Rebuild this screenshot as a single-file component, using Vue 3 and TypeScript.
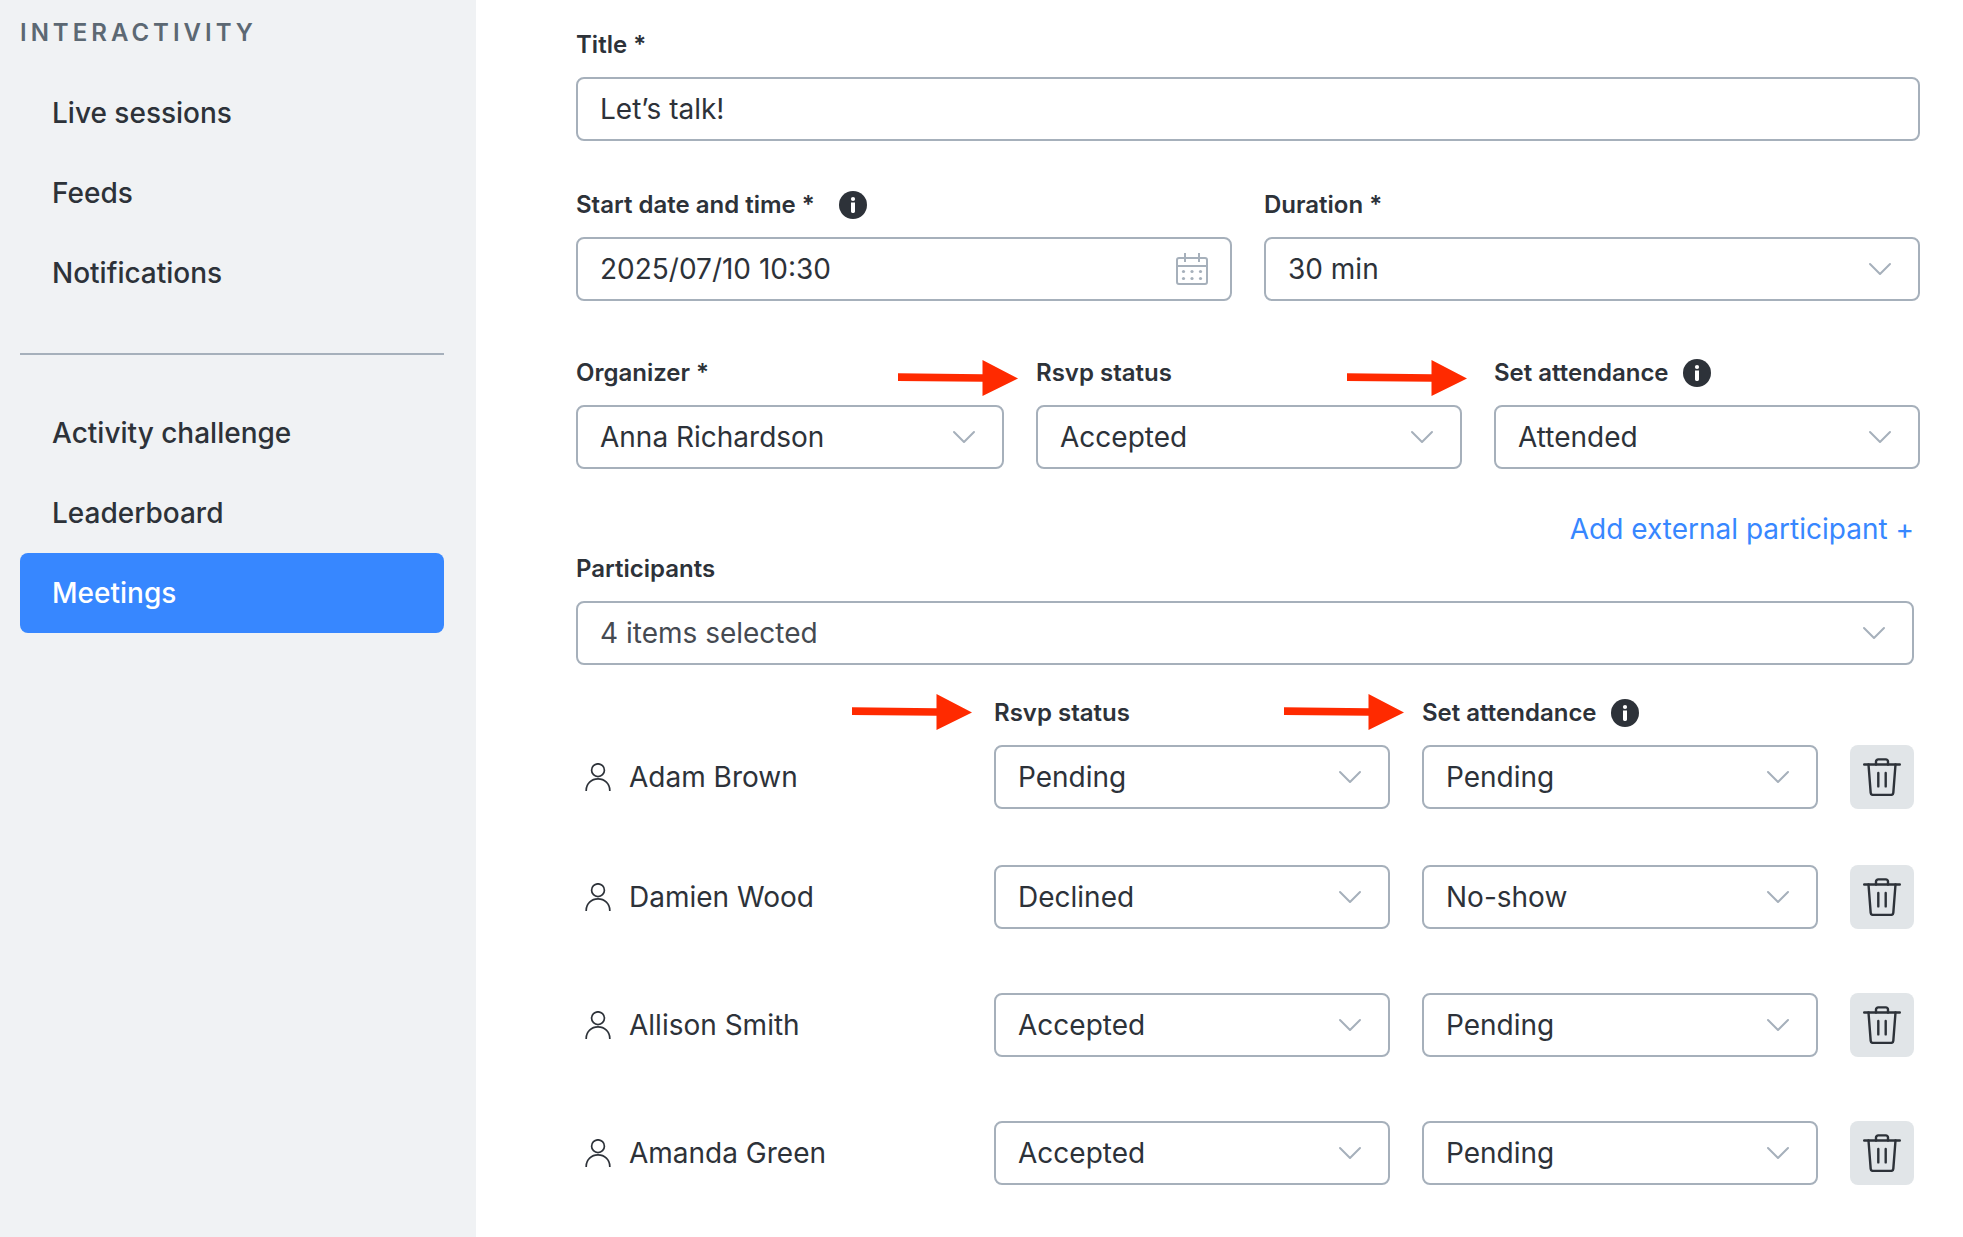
<script setup lang="ts">
import { ref } from 'vue'

interface Participant {
  name: string
  rsvp: string
  attendance: string
}

const topLinks: string[] = ['Live sessions', 'Feeds', 'Notifications']
const bottomLinks: string[] = ['Activity challenge', 'Leaderboard', 'Meetings']
const activeLink = 'Meetings'

const rsvpOptions: string[] = ['Pending', 'Accepted', 'Declined']
const attendanceOptions: string[] = ['Pending', 'Attended', 'No-show']
const durations: string[] = ['15 min', '30 min', '60 min']

const title = ref('Let’s talk!')
const start = ref('2025/07/10 10:30')
const duration = ref('30 min')
const organizer = ref('Anna Richardson')
const organizerRsvp = ref('Accepted')
const organizerAttendance = ref('Attended')

const participants = ref<Participant[]>([
  { name: 'Adam Brown', rsvp: 'Pending', attendance: 'Pending' },
  { name: 'Damien Wood', rsvp: 'Declined', attendance: 'No-show' },
  { name: 'Allison Smith', rsvp: 'Accepted', attendance: 'Pending' },
  { name: 'Amanda Green', rsvp: 'Accepted', attendance: 'Pending' },
])

function remove(index: number): void {
  participants.value.splice(index, 1)
}
</script>

<template>
  <svg class="symbols" aria-hidden="true">
    <symbol id="chevron" viewBox="0 0 24 14">
      <path d="M2 2l10 10L22 2" fill="none" stroke="currentColor" stroke-width="2" stroke-linecap="round" stroke-linejoin="round" />
    </symbol>
    <symbol id="info" viewBox="0 0 28 28">
      <circle cx="14" cy="14" r="14" fill="#2d3239" />
      <circle cx="14" cy="8" r="2.1" fill="#fff" />
      <path d="M12 11.4h4V20.6a1.4 1.4 0 0 1-1.4 1.4h-1.2a1.4 1.4 0 0 1-1.4-1.4z" fill="#fff" />
    </symbol>
    <symbol id="arrow" viewBox="0 0 120 36">
      <path d="M0 13.3L84.500 14.200V0L120 18.400L84.500 36V21.800L0 21z" fill="#ff2a00" />
    </symbol>
    <symbol id="person" viewBox="0 0 26 28">
      <g fill="none" stroke="#2d3239" stroke-width="1.700">
        <circle cx="13" cy="7.200" r="6.400" />
        <path d="M1.200 28v-.6C1.200 20.700 6.400 15.900 13 15.900s11.800 4.800 11.800 11.500v.6" />
      </g>
    </symbol>
    <symbol id="trash" viewBox="0 0 38 38">
      <g fill="none" stroke="#2d3239" stroke-width="2.400" stroke-linecap="round" stroke-linejoin="round">
        <path d="M1.200 6.500h35.600" />
        <path d="M13 6.500V3.600a2.200 2.200 0 0 1 2.200-2.200h7.600A2.200 2.200 0 0 1 25 3.600v2.900" />
        <path d="M5.500 6.500l2.200 28.300A2.300 2.300 0 0 0 10 36.900h18a2.300 2.300 0 0 0 2.300-2.100L32.500 6.500" />
        <path d="M15.300 15v13.400M22.700 15v13.400" />
      </g>
    </symbol>
  </svg>

  <div class="page">
    <aside class="sidebar">
      <h2 class="heading">INTERACTIVITY</h2>
      <nav>
        <a v-for="link in topLinks" :key="link" href="#" class="nav-link">{{ link }}</a>
        <hr class="divider" />
        <a
          v-for="link in bottomLinks"
          :key="link"
          href="#"
          class="nav-link"
          :class="{ active: link === activeLink }"
        >{{ link }}</a>
      </nav>
    </aside>

    <main class="content">
      <form @submit.prevent>
        <div class="field">
          <div class="label-row"><label for="title">Title *</label></div>
          <input id="title" v-model="title" class="control" type="text" />
        </div>

        <div class="row halves">
          <div class="field">
            <div class="label-row spaced">
              <label for="start">Start date and time *</label>
              <svg class="info" role="img" aria-label="Information"><use href="#info" /></svg>
            </div>
            <div class="box">
              <input id="start" v-model="start" class="control" type="text" />
              <svg class="calendar" viewBox="0 0 32 32" aria-hidden="true">
                <g fill="none" stroke="currentColor" stroke-width="2">
                  <rect x="1" y="5" width="30" height="26" rx="2" />
                  <path d="M1 13h30M9 0v9M23 0v9" />
                </g>
                <g fill="currentColor">
                  <circle cx="7.500" cy="18.500" r="1.600" />
                  <circle cx="16" cy="18.500" r="1.600" />
                  <circle cx="24.500" cy="18.500" r="1.600" />
                  <circle cx="7.500" cy="25.500" r="1.600" />
                  <circle cx="16" cy="25.500" r="1.600" />
                  <circle cx="24.500" cy="25.500" r="1.600" />
                </g>
              </svg>
            </div>
          </div>
          <div class="field">
            <div class="label-row"><label for="duration">Duration *</label></div>
            <div class="box">
              <select id="duration" v-model="duration" class="control">
                <option v-for="d in durations" :key="d">{{ d }}</option>
              </select>
              <svg class="chevron" aria-hidden="true"><use href="#chevron" /></svg>
            </div>
          </div>
        </div>

        <div class="row thirds">
          <div class="field">
            <div class="label-row"><label for="organizer">Organizer *</label></div>
            <div class="box">
              <select id="organizer" v-model="organizer" class="control">
                <option>Anna Richardson</option>
              </select>
              <svg class="chevron" aria-hidden="true"><use href="#chevron" /></svg>
            </div>
          </div>
          <div class="field">
            <div class="label-row">
              <svg class="arrow" aria-hidden="true"><use href="#arrow" /></svg>
              <label for="organizer-rsvp">Rsvp status</label>
            </div>
            <div class="box">
              <select id="organizer-rsvp" v-model="organizerRsvp" class="control">
                <option v-for="o in rsvpOptions" :key="o">{{ o }}</option>
              </select>
              <svg class="chevron" aria-hidden="true"><use href="#chevron" /></svg>
            </div>
          </div>
          <div class="field">
            <div class="label-row">
              <svg class="arrow far" aria-hidden="true"><use href="#arrow" /></svg>
              <label for="organizer-attendance">Set attendance</label>
              <svg class="info" role="img" aria-label="Information"><use href="#info" /></svg>
            </div>
            <div class="box">
              <select id="organizer-attendance" v-model="organizerAttendance" class="control">
                <option v-for="o in attendanceOptions" :key="o">{{ o }}</option>
              </select>
              <svg class="chevron" aria-hidden="true"><use href="#chevron" /></svg>
            </div>
          </div>
        </div>

        <section class="participants">
          <a href="#" class="add-link">Add external participant +</a>
          <div class="field">
            <div class="label-row"><label for="participants">Participants</label></div>
            <div class="box">
              <select id="participants" class="control summary">
                <option>{{ participants.length }} items selected</option>
              </select>
              <svg class="chevron" aria-hidden="true"><use href="#chevron" /></svg>
            </div>
          </div>

          <ul class="list">
            <li v-for="(person, i) in participants" :key="person.name" class="participant">
              <div class="person">
                <svg class="person-icon" aria-hidden="true"><use href="#person" /></svg>
                <span>{{ person.name }}</span>
              </div>
              <div class="field">
                <div v-if="i === 0" class="label-row">
                  <svg class="arrow raised mid" aria-hidden="true"><use href="#arrow" /></svg>
                  <label for="rsvp-0">Rsvp status</label>
                </div>
                <div class="box">
                  <select :id="`rsvp-${i}`" v-model="person.rsvp" class="control" :aria-label="`Rsvp status of ${person.name}`">
                    <option v-for="o in rsvpOptions" :key="o">{{ o }}</option>
                  </select>
                  <svg class="chevron" aria-hidden="true"><use href="#chevron" /></svg>
                </div>
              </div>
              <div class="field">
                <div v-if="i === 0" class="label-row">
                  <svg class="arrow raised" aria-hidden="true"><use href="#arrow" /></svg>
                  <label for="attendance-0">Set attendance</label>
                  <svg class="info" role="img" aria-label="Information"><use href="#info" /></svg>
                </div>
                <div class="box">
                  <select :id="`attendance-${i}`" v-model="person.attendance" class="control" :aria-label="`Attendance of ${person.name}`">
                    <option v-for="o in attendanceOptions" :key="o">{{ o }}</option>
                  </select>
                  <svg class="chevron" aria-hidden="true"><use href="#chevron" /></svg>
                </div>
              </div>
              <button type="button" class="delete" :aria-label="`Remove ${person.name}`" @click="remove(i)">
                <svg class="trash" aria-hidden="true"><use href="#trash" /></svg>
              </button>
            </li>
          </ul>
        </section>
      </form>
    </main>
  </div>
</template>

<style>
body {
  margin: 0;
  background: #fff;
}
</style>

<style scoped>
.symbols {
  display: none;
}

.page {
  display: flex;
  min-height: 100vh;
  font-family: Inter, "Liberation Sans", sans-serif;
  font-optical-sizing: none;
  font-size: 28px;
  line-height: 32px;
  color: #2d3239;
}

.page * {
  box-sizing: border-box;
}

.sidebar {
  flex: 0 0 476px;
  box-sizing: border-box;
  padding: 17px 32px 0 20px;
  background: #f0f2f4;
}

.heading {
  margin: 0 0 24px;
  font-size: 24px;
  font-weight: 600;
  letter-spacing: 4px;
  color: #5c6873;
}

.nav-link {
  display: flex;
  align-items: center;
  height: 80px;
  padding: 0 32px;
  border-radius: 8px;
  color: inherit;
  font-weight: 500;
  text-decoration: none;
}

.nav-link.active {
  background: #3787ff;
  color: #fff;
}

.divider {
  height: 2px;
  margin: 40px 0 38px;
  border: 0;
  background: #a6b0bb;
}

.content {
  flex: 1;
  min-width: 0;
  padding: 29px 43px 48px 100px;
}

.row {
  display: grid;
  gap: 32px;
}

.halves {
  grid-template-columns: 1fr 1fr;
  margin-top: 48px;
}

.thirds {
  grid-template-columns: 428fr 426fr 426fr;
  margin-top: 56px;
}

.label-row {
  position: relative;
  display: flex;
  align-items: center;
  gap: 14px;
  height: 32px;
  margin-bottom: 16px;
  font-size: 24px;
  font-weight: 600;
}

.label-row.spaced {
  gap: 24px;
}

.info {
  width: 28px;
  height: 28px;
}

.box {
  position: relative;
}

.control {
  display: block;
  width: 100%;
  height: 64px;
  margin: 0;
  padding: 0 22px;
  border: 2px solid #a6b0bb;
  border-radius: 8px;
  outline: 0;
  background: #fff;
  color: inherit;
  font: inherit;
  font-optical-sizing: none;
  appearance: none;
}

.summary {
  color: #454a51;
}

.chevron {
  position: absolute;
  top: 25px;
  right: 28px;
  width: 24px;
  height: 14px;
  color: #a6b0bb;
  pointer-events: none;
}

.calendar {
  position: absolute;
  top: 16px;
  right: 24px;
  width: 32px;
  height: 32px;
  color: #a6b0bb;
}

.arrow {
  position: absolute;
  top: 3px;
  right: calc(100% + 18px);
  width: 120px;
  height: 36px;
}

.arrow.mid {
  right: calc(100% + 22px);
}

.arrow.far {
  right: calc(100% + 27px);
}

.arrow.raised {
  top: -3px;
}

.participants {
  display: flex;
  flex-direction: column;
  margin: 44px 6px 0 0;
}

.add-link {
  align-self: flex-end;
  margin-bottom: 8px;
  color: #3787ff;
  text-decoration: none;
}

.list {
  margin: 32px 0 0;
  padding: 0;
  list-style: none;
}

.participant {
  display: grid;
  grid-template-columns: 386fr 396fr 396fr 64px;
  align-items: end;
  gap: 32px;
  margin-bottom: 64px;
}

.participant:first-child {
  margin-bottom: 56px;
}

.participant:last-child {
  margin-bottom: 0;
}

.person {
  display: flex;
  align-items: center;
  gap: 18px;
  height: 64px;
  padding-left: 9px;
}

.person-icon {
  width: 26px;
  height: 28px;
}

.delete {
  display: flex;
  align-items: center;
  justify-content: center;
  width: 64px;
  height: 64px;
  padding: 0;
  border: 0;
  border-radius: 8px;
  background: #e1e5e8;
}

.trash {
  width: 38px;
  height: 38px;
}
</style>
